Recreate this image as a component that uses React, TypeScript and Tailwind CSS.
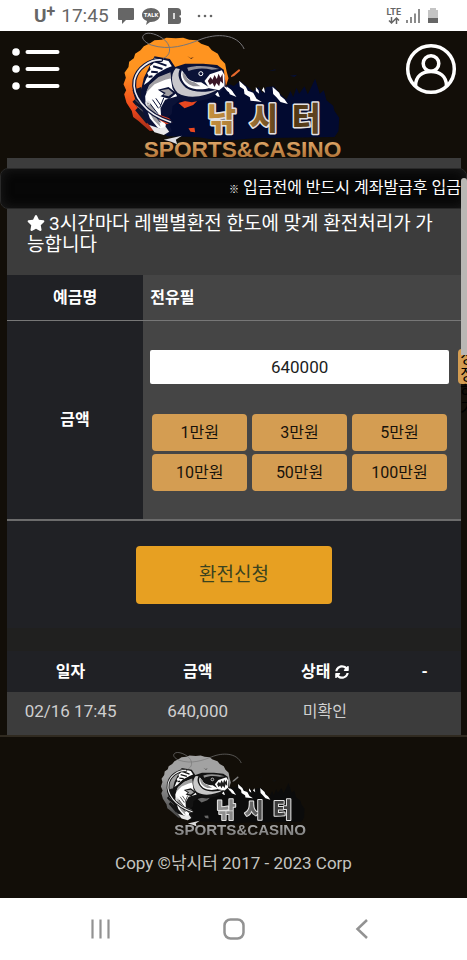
import { useState } from 'react'
import { FaStar, FaSyncAlt } from 'react-icons/fa'

interface Withdrawal {
  date: string
  amount: number
  status: string
}

const QUICK_AMOUNTS = [1, 3, 5, 10, 50, 100]

const HISTORY: Withdrawal[] = [{ date: '02/16 17:45', amount: 640000, status: '미확인' }]

function Logo({ id, className }: { id: string; className: string }) {
  return (
    <svg viewBox="18 0 680 396" className={className} role="img" aria-label="낚시터 SPORTS&CASINO">
      <defs>
        <linearGradient id={`${id}-sun`} x1="0" y1="0" x2="0" y2="1">
          <stop offset="0.35" stopColor="#ff9420" />
          <stop offset="0.75" stopColor="#f0481c" />
          <stop offset="1" stopColor="#a02c18" />
        </linearGradient>
        <linearGradient id={`${id}-gold`} x1="0" y1="0" x2="0" y2="1">
          <stop offset="0" stopColor="#edb878" />
          <stop offset="1" stopColor="#a5672c" />
        </linearGradient>
        <linearGradient id={`${id}-name`} gradientUnits="userSpaceOnUse" x1="280" y1="0" x2="620" y2="0">
          <stop offset="0" stopColor="#c8913e" />
          <stop offset="0.4" stopColor="#9c7034" />
          <stop offset="0.7" stopColor="#49320f" />
          <stop offset="1" stopColor="#624522" />
        </linearGradient>
      </defs>

      {/* sun */}
      <path
        d="M40 215 L33 190 39 178 31 160 38 140 34 125 46 108 48 92 62 82 66 68 82 58 92 46 112 36 124 28 146 26 160 20 188 22 210 20 228 26 250 28 264 38 286 46 296 58 314 68 322 84 336 98 340 120 346 142 330 190 280 280 110 300 76 270 60 258 56 240Z"
        fill={`url(#${id}-sun)`}
      />

      {/* water, mountains and trees */}
      <path
        d="M120 230 L180 200 240 200 290 186 320 175 350 160 362 165 380 150 404 168 420 182 436 168 448 186 460 168 482 166 504 192 520 205 532 180 540 198 550 170 558 188 574 166 584 190 606 143 620 188 632 178 640 208 660 224 664 240 678 260 676 300 664 318 420 322 330 330 250 318 160 316Z"
        fill="#020a30"
      />
      <path d="M196 216L236 204 252 210 240 222 214 232ZM226 292L244 290 246 304 232 302Z" fill="#e94820" />
      <path d="M355 133L378 114 381 119 363 135 353 139ZM332 138L340 152 331 148Z" fill="#e7692c" />
      <path
        d="M378 149L398 167 404 179 420 185 430 203 446 213 412 209 410 199 394 189 392 175 380 167ZM428 168L436 178 438 188 428 180ZM452 168L456 186 446 178ZM478 167L498 185 502 195 514 205 524 219 502 213 490 199 480 189ZM340 166L354 176 370 198 350 190Z"
        fill="#fff"
      />
      <path d="M468 120L486 115 488 118ZM530 134L552 131 544 138Z" fill="#061038" />

      {/* tail and back fin */}
      <path d="M58 178L84 168 110 260 100 278 66 238 74 230 58 212 66 204Z" fill="#10142b" />
      <path d="M64 190L88 216M66 206L92 230M70 224L98 248" stroke="#6c6a74" strokeWidth="3" />

      {/* silhouette */}
      <path
        d="M124 76L170 84 186 108 216 98 270 98 312 102 332 116 338 166 320 184 286 204 236 214 200 208 178 226 176 248 162 262 176 300 160 312 132 304 102 276 84 226 84 176 92 140Z"
        fill="#0b1237"
      />

      {/* dorsal fin */}
      <path d="M124 80L166 90 176 106 160 112 130 128 106 152 92 162 100 142 106 134 102 126 112 116 110 106 120 98Z" fill="#fff" />
      <path d="M126 92L160 104M120 106L148 114M114 122L134 124M106 138L118 136" stroke="#0b1237" strokeWidth="6" />

      {/* body */}
      <path
        d="M170 126L138 140 108 164 96 196 98 226 110 262 134 290 156 296 158 280 144 256 142 232 156 206 192 196 178 172Z"
        fill="#fff"
      />
      <path
        d="M172 124L136 138 108 162 98 186 124 160 156 146 174 142ZM100 214L106 240 122 268 142 288 136 260 124 236 112 216Z"
        fill="#a2a0a4"
      />
      <path
        d="M118 206L136 232M128 202L142 222M112 220L134 248M124 252L142 274M152 200L140 230"
        stroke="#0b1237"
        strokeWidth="3"
      />
      <path d="M134 176L166 168 190 186 168 204 142 196 152 188Z" fill="#0b1237" />
      <path d="M142 178L166 174 180 186 166 196 150 192 158 186Z" fill="#a2a0a4" />

      {/* gill and cheek */}
      <path d="M188 112C170 132 174 166 194 186C226 206 280 196 312 176C280 184 240 186 218 170C196 150 192 132 200 114Z" fill="#c9c8cc" />
      <path d="M206 118C198 140 210 158 226 168C246 178 274 176 290 170L264 154C246 154 226 150 218 134Z" fill="#fff" />
      <path d="M208 124C206 146 222 160 240 166L262 166 244 154C232 152 220 144 218 132Z" fill="#97959b" />
      <path d="M222 110C250 102 288 104 318 114L296 116C270 110 246 112 226 120Z" fill="#918f98" />
      <circle cx="263" cy="128" r="6" fill="#0b1237" stroke="#fff" strokeWidth="3" />

      {/* mouth */}
      <path d="M274 150L290 130 326 118 334 132 334 164 318 178 288 172Z" fill="#fff" />
      <path
        d="M284 150L292 138 298 146 304 132 311 144 316 128 322 140 328 128 330 158 322 150 318 166 310 156 304 168 298 156 290 162Z"
        fill="#3a1626"
      />
      <path d="M306 190L314 182 320 198 312 196ZM330 164L350 174 360 184 356 190 342 180Z" fill="#fff" />

      {/* belly fins */}
      <path d="M134 250L168 262 178 274 160 280 138 266Z" fill="#e74422" />
      <path d="M108 282L138 292 158 288 168 302 152 312 124 304Z" fill="#e9e8ea" />
      <path d="M152 326L206 314 188 326 192 340 174 332Z" fill="#dcdce2" />

      {/* rod and line */}
      <path
        d="M144 87C110 85 72 111 64 147C56 191 92 247 172 273"
        fill="none"
        stroke="#0b1237"
        strokeWidth="12"
        strokeLinecap="round"
      />
      <path
        d="M144 87C110 85 72 111 64 147C56 191 92 247 172 273"
        fill="none"
        stroke="#eeedf0"
        strokeWidth="5"
        strokeLinecap="round"
      />
      <circle cx="104" cy="216" r="6" fill="none" stroke="#dddde2" strokeWidth="3" />
      <path
        d="M150 82C172 74 176 50 158 30C134 8 104 2 94 10C82 18 90 32 114 42C170 60 220 42 260 26C310 6 372 8 393 54"
        fill="none"
        stroke="#77767a"
        strokeWidth="3"
      />
      <path d="M222 75L232 81 242 79 234 84Z" fill="#4b2712" />

      {/* wordmark */}
      <g
        fontFamily="'Noto Sans CJK KR', sans-serif"
        fontSize="94"
        fontWeight="900"
        fill={`url(#${id}-name)`}
        stroke="#e5e2e3"
        strokeWidth="9"
        strokeLinejoin="round"
        paintOrder="stroke"
      >
        <text x="282" y="297">
          낚
        </text>
        <text x="408" y="297">
          시
        </text>
        <text x="536" y="297">
          터
        </text>
      </g>
      <text
        x="388"
        y="377"
        textAnchor="middle"
        fontFamily="'Liberation Sans', sans-serif"
        fontSize="68"
        fontWeight="700"
        fill={`url(#${id}-gold)`}
      >
        SPORTS&amp;CASINO
      </text>
    </svg>
  )
}

function StatusBar() {
  return (
    <div className="flex h-[31px] items-center justify-between bg-white pr-7 pl-[34px] text-[#666]">
      <div className="flex items-center">
        <span className="text-[19px] leading-6 font-bold">U</span>
        <span className="pb-2 text-base leading-4 font-bold">+</span>
        <span className="ml-1.5 text-[19px] leading-6">17:45</span>
        <svg viewBox="0 0 18 18" className="ml-2 h-[18px] w-[18px]" fill="currentColor">
          <path d="M2 1h14q1 0 1 1v10q0 1-1 1H9l-4 4v-4H2q-1 0-1-1V2q0-1 1-1z" />
        </svg>
        <svg viewBox="0 0 18 18" className="ml-[7px] h-[18px] w-[18px]">
          <path d="M9 1c5 0 9 3 9 7s-4 7-9 7H8l-4 3 1-4C2 13 0 11 0 8c0-4 4-7 9-7z" fill="#666" />
          <text x="9" y="10" textAnchor="middle" fontSize="6" fontWeight="700" fill="#fff">
            TALK
          </text>
        </svg>
        <svg viewBox="0 0 14 18" className="ml-2 h-[18px] w-[14px]">
          <path d="M0 1h9q4 0 4 4v3l-2 1 2 2v3q0 3-3 3H0z" fill="#666" />
          <path d="M6 6v6" stroke="#fff" strokeWidth="1.5" />
        </svg>
        <svg viewBox="0 0 18 4" className="ml-3.5 h-1 w-[18px]" fill="currentColor">
          <circle cx="3" cy="2" r="1.3" />
          <circle cx="9" cy="2" r="1.3" />
          <circle cx="15" cy="2" r="1.3" />
        </svg>
      </div>
      <div className="flex items-center gap-1">
        <div className="flex flex-col items-center">
          <span className="text-[9px] leading-[9px] font-bold">LTE</span>
          <svg viewBox="0 0 12 7" className="h-[7px] w-3" fill="none" stroke="currentColor" strokeWidth="1.5">
            <path d="M3.5 0v6M1 3.500l2.500 2.500 2.500-2.500M8.500 7V1M6 3.500L8.500 1 11 3.500" />
          </svg>
        </div>
        <svg viewBox="0 0 16 16" className="h-4 w-4" stroke="#666" strokeWidth="1.5">
          <path d="M2 12v3M6 9v6M10 5.500V15M14 1v14" />
        </svg>
        <svg viewBox="0 0 12 17" className="ml-0.5 h-[17px] w-3">
          <path d="M1 3h2V1h6v2h2v13H1z" fill="#c4c4c4" />
          <path d="M1 11h10v5H1z" fill="#666" />
        </svg>
      </div>
    </div>
  )
}

function Header() {
  return (
    <header className="flex h-[127px] items-start justify-between pr-2.5 pl-3">
      <button type="button" aria-label="메뉴" className="mt-4">
        <svg viewBox="0 0 48 44" className="h-11 w-12" fill="#fff">
          {[5, 22, 39].map((y) => (
            <g key={y}>
              <circle cx="4" cy={y} r="3.800" />
              <rect x="13.500" y={y - 2} width="34" height="4" rx="2" />
            </g>
          ))}
        </svg>
      </button>
      <Logo id="top" className="h-[132px] w-[227px]" />
      <button type="button" aria-label="내 정보" className="mt-3">
        <svg viewBox="0 0 52 52" className="h-[52px] w-[52px]" fill="none" stroke="#fff" strokeWidth="3.500">
          <circle cx="26" cy="26" r="23.300" />
          <circle cx="26" cy="20.500" r="7.800" />
          <path d="M10.500 43c0-10 7-14.500 15.500-14.500S41.500 33 41.500 43" />
        </svg>
      </button>
    </header>
  )
}

function HistoryTable({ rows }: { rows: Withdrawal[] }) {
  return (
    <table className="w-full table-fixed text-center">
      <thead className="h-[41px] bg-[#202125] text-base text-white">
        <tr>
          <th className="w-[28%]">일자</th>
          <th className="w-[28%]">금액</th>
          <th className="w-[28%]">
            <span className="inline-flex items-center gap-1">
              상태
              <button type="button" aria-label="새로고침">
                <FaSyncAlt className="h-3.5 w-3.5" />
              </button>
            </span>
          </th>
          <th>-</th>
        </tr>
      </thead>
      <tbody className="bg-[#3c3c3c] text-[#cfcfcf]">
        {rows.map((row) => (
          <tr key={row.date} className="h-[43px]">
            <td className="pb-1 text-[17px]">{row.date}</td>
            <td className="pb-1 text-[17px]">{row.amount.toLocaleString('en-US')}</td>
            <td className="pb-1 text-base">{row.status}</td>
            <td />
          </tr>
        ))}
      </tbody>
    </table>
  )
}

function NavBar() {
  return (
    <nav className="flex h-[62px] items-center justify-between bg-white pr-[98px] pl-[90px] text-[#929292]">
      <button type="button" aria-label="최근 앱">
        <svg viewBox="0 0 22 22" className="h-[22px] w-[22px]" stroke="currentColor" strokeWidth="2.200">
          <path d="M2.500 1.500v19M10.500 1.500v19M18.500 1.500v19" />
        </svg>
      </button>
      <button type="button" aria-label="홈">
        <svg viewBox="0 0 22 22" className="h-[22px] w-[22px]" fill="none" stroke="currentColor" strokeWidth="2.500">
          <rect x="1.500" y="1.500" width="19" height="19" rx="6" />
        </svg>
      </button>
      <button type="button" aria-label="뒤로">
        <svg viewBox="0 0 14 22" className="h-[22px] w-3.5" fill="none" stroke="currentColor" strokeWidth="2.500">
          <path d="M12 2L2.500 11l9.500 9" />
        </svg>
      </button>
    </nav>
  )
}

export default function App() {
  const [amount, setAmount] = useState('640000')

  return (
    <div className="relative overflow-hidden bg-[#120e08] font-[Roboto,'Noto_Sans_CJK_KR',sans-serif]">
      <StatusBar />
      <Header />

      <main className="pr-1.5 pl-[7px]">
        <div className="bg-[#3c3c3c] pt-2.5">
          <div className="-mr-1.5 -ml-[7px] h-[41px] overflow-hidden rounded-lg border border-[#292929] bg-[#070707] pl-[228px] text-base leading-[38px] whitespace-nowrap text-white shadow-[inset_0_0_12px_#1c1c1c]">
            <span className="text-[10px]">※</span> 입금전에 반드시 계좌발급후 입금
          </div>
          <p className="h-[66px] px-5 pt-1 text-[19px] leading-[21px] break-all text-white">
            <FaStar className="mr-1 inline h-[18px] w-[18px] align-[-2px]" />
            3시간마다 레벨별환전 한도에 맞게 환전처리가 가능합니다
          </p>
        </div>

        <form onSubmit={(e) => e.preventDefault()}>
          <div className="flex h-[46px] border-b border-[#777] font-bold text-white">
            <div className="flex w-[30%] items-center justify-center bg-[#202125]">예금명</div>
            <div className="flex flex-1 items-center bg-[#454545] pl-[7px]">전유필</div>
          </div>
          <div className="flex h-[200px] border-b-2 border-[#6c6c6c]">
            <label htmlFor="amount" className="flex w-[30%] items-center justify-center bg-[#202125] font-bold text-white">
              금액
            </label>
            <div className="relative flex-1 bg-[#454545] pt-[29px] pr-3 pl-[7px]">
              <input
                id="amount"
                value={amount}
                onChange={(e) => setAmount(e.target.value)}
                inputMode="numeric"
                className="block h-[34px] w-full rounded-xs bg-white text-center text-[17px] text-[#1b1d22]"
              />
              <button
                type="button"
                onClick={() => setAmount('')}
                className="absolute top-[28px] -right-4 h-[35px] w-[19px] rounded-sm bg-[#d49d52] text-base leading-[17px] break-all text-black"
              >
                <span className="block h-[35px]">정정하기</span>
              </button>
              <div className="mt-[30px] grid grid-cols-3 gap-x-[5px] gap-y-[3px] px-0.5">
                {QUICK_AMOUNTS.map((n) => (
                  <button
                    key={n}
                    type="button"
                    onClick={() => setAmount(String(Number(amount) + n * 10000))}
                    className="h-[37px] rounded-sm bg-[#d49d52] text-base text-[#17120b]"
                  >
                    {n}만원
                  </button>
                ))}
              </div>
            </div>
          </div>
          <div className="flex justify-center bg-[#202125] pt-[25px] pb-6">
            <button type="submit" className="h-[58px] w-[43%] rounded-sm bg-[#e7a022] text-[19px] text-[#3b431f]">
              환전신청
            </button>
          </div>
        </form>

        <div className="h-[23px] bg-[#20201f]" />
        <HistoryTable rows={HISTORY} />
      </main>

      <footer className="flex h-[163px] flex-col items-center border-t-2 border-[#302a20] pt-3.5 text-[#c5c5c0]">
        <Logo id="bottom" className="h-[88px] w-[151px] grayscale" />
        <p className="mt-3 text-[17px] leading-6">Copy ©낚시터 2017 - 2023 Corp</p>
      </footer>

      <NavBar />

      {/* scroll thumb */}
      <div className="absolute top-[178px] right-0 h-[177px] w-1.5 rounded-t-sm bg-[#b9b7b4]" />
    </div>
  )
}
